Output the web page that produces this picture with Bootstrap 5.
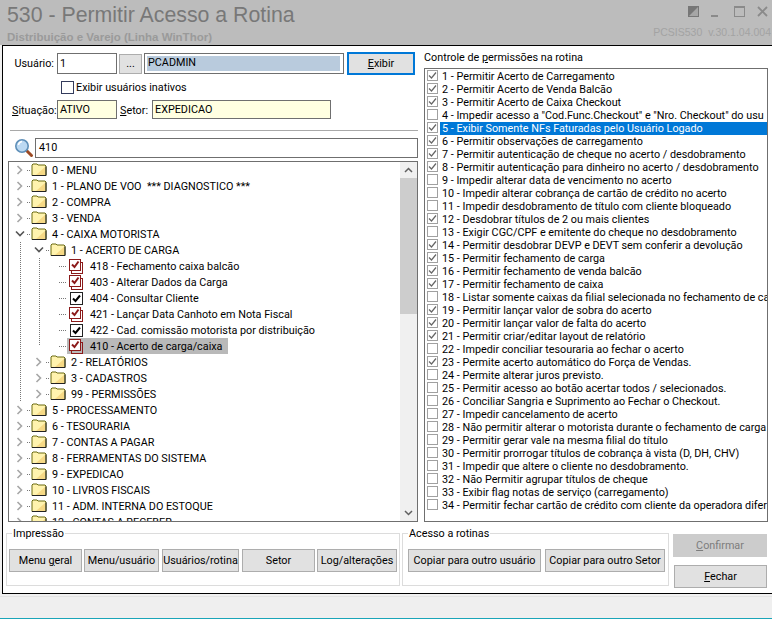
<!DOCTYPE html>
<html lang="pt-BR">
<head>
    <meta charset="UTF-8">
    <title>530 - Permitir Acesso a Rotina</title>
    <meta name="viewport" content="width=device-width, initial-scale=1">
    <link href="https://cdn.jsdelivr.net/npm/bootstrap@5.3.3/dist/css/bootstrap.min.css" rel="stylesheet">
    <style>
        html, body { height: 619px; overflow: hidden; }
        body { background: #f0f0f0; font-family: Roboto, "Liberation Sans", sans-serif; font-size: 10.8px; line-height: 13px; color: #000; }

        /* cabecalho */
        .head-bar { height: 45px; background: #bcbcbc; padding: 4px 1px 0 7px; font-family: "Liberation Sans", sans-serif; }
        .head-title { font-size: 21.3px; line-height: 22px; color: #787878; }
        .head-sub { font-size: 11.5px; line-height: 14px; font-weight: 700; color: #9a9a9a; margin-top: 4px; }
        .head-ver { font-size: 10.5px; line-height: 14px; color: #a3a3a3; white-space: pre; margin-top: 8px; }
        .win-btns { height: 13px; gap: 12px; padding: 2px 3px 0 0; }
        .win-min { margin-right: 4px; }

        /* painel principal */
        .main-panel { height: 549px; margin-left: 2px; background: #fff; border-top: 1px solid #000; border-left: 1px solid #000; border-bottom: 1px solid #000; }
        .left-col { width: 415px; padding-left: 5px; }
        .right-col { width: 353px; padding-left: 6px; }

        .line-user { height: 23px; margin-top: 6px; }
        .line-check { height: 25px; padding: 6px 0 0 53px; }
        .line-info { height: 20px; }
        .lbl-user { flex: none; width: 49px; text-align: right; padding-right: 3px; }
        .lbl-sit { flex: none; width: 49px; padding-left: 4px; white-space: nowrap; }
        .lbl-setor { flex: none; width: 35px; padding-left: 3px; }

        .win-input { height: 21px; border: 1px solid #6f6f6f; background: #fff; padding: 2px; line-height: 15px; white-space: nowrap; }
        .win-input.yellow { background: #ffffe1; height: 19px; padding: 1px 2px; }
        .win-input.search-box { height: 20px; padding: 1px 2px 1px 3px; flex: 1; }
        .w-user { flex: none; width: 60px; }
        .w-setor { flex: none; width: 179px; }
        .name-box { flex: none; width: 200px; margin-left: 2px; }
        .name-fill { display: block; height: 15px; width: 193px; background: #b9cbdd; padding-left: 1px; line-height: 14px; }

        .win-btn { display: block; flex: none; height: 23px; padding: 0; background: #e1e1e1; border: 1px solid #adadad; border-radius: 0; color: #000; font-size: 10.8px; line-height: 13px; text-align: center; white-space: nowrap; }
        .win-btn:disabled { background: #cccccc; border-color: #cccccc; color: #7d7d7d; opacity: 1; }
        .btn-dots { width: 23px; height: 20px; margin-left: 2px; }
        .btn-exibir { width: 68px; margin-left: 3px; border: 2px solid #0078d7; }
        .btn-w73 { width: 73px; }
        .btn-w75 { width: 75px; margin-left: 2px; }
        .btn-w77 { width: 77px; margin-left: 3px; }
        .btn-w73b { width: 73px; margin-left: 3px; }
        .btn-w80 { width: 80px; margin-left: 2px; }
        .btn-copy1 { width: 133px; }
        .btn-copy2 { width: 120px; }
        .btn-confirm { width: 94px; }
        .btn-fechar { width: 93px; margin-left: 1px; }

        .win-check { flex: none; display: block; width: 13px; height: 13px; border: 1px solid #333b5c; margin-right: 2px; }
        .sep-line { height: 1px; background: #a9a9a9; margin: 10px 0 7px 2px; }
        .search-icon { flex: none; margin-left: 6px; }

        /* arvore */
        .tree-box { height: 361px; margin-top: 3px; border: 1px solid #6f6f6f; overflow: hidden; }
        .tree-scroll { flex: 1; overflow: hidden; }
        .tree-row { height: 16px; white-space: nowrap; }
        .tree-guide { flex: none; width: 1px; height: 16px; background: repeating-linear-gradient(to bottom, #777 0 1px, transparent 1px 2px); }
        .tree-guide.first { margin-left: 11px; }
        .tree-guide.second { margin-left: 18px; }
        .tree-guide.half { height: 8px; align-self: flex-start; }
        .tree-dots { flex: none; width: 4px; height: 1px; background: repeating-linear-gradient(to right, #777 0 1px, transparent 1px 2px); margin-left: 2px; }
        .tree-dots.long { width: 8px; margin-left: 19px; }
        .tree-chev { flex: none; width: 10px; display: flex; justify-content: center; align-items: center; }
        .tree-chev.lv0 { margin-left: 6px; }
        .tree-chev.lv1 { margin-left: 13px; }
        .tree-folder { flex: none; display: block; }
        .tree-text { margin-left: 5px; height: 16px; padding-top: 1px; line-height: 16px; }
        .tree-node { display: flex; align-items: center; height: 16px; padding: 0 5px 0 2px; }
        .tree-node .tree-text { margin-left: 7px; }
        .tree-node.picked { background: #b9b9b9; }
        .node-icon { flex: none; display: block; width: 14px; height: 15px; }

        .scroll-track { flex: none; width: 17px; background: #f0f0f0; }
        .scroll-arrow { height: 16px; }
        .scroll-thumb { height: 136px; background: #cdcdcd; }

        /* grupos */
        .group-box { position: relative; flex: none; height: 53px; border: 1px solid #dcdcdc; }
        .group-title { position: absolute; left: 5px; top: -6px; background: #fff; padding: 0 1px; line-height: 12px; }
        .group-print { width: 394px; margin: 11px 0 0 -2px; }
        .group-copy { width: 267px; }
        .group-row { padding: 15px 0 0 2px; }
        .group-row.copy { padding-left: 5px; gap: 4px; }

        /* permissoes */
        .perm-title { height: 22px; padding-top: 5px; }
        .perm-box { height: 454px; width: 344px; border: 1px solid #6f6f6f; padding-top: 1px; overflow: hidden; }
        .perm-row { height: 13px; white-space: nowrap; padding-left: 2px; }
        .perm-check { flex: none; width: 11px; height: 11px; display: block; margin-right: 2px; }
        .perm-text { flex: 1; line-height: 13px; padding-left: 2px; overflow: hidden; }
        .perm-row.selected .perm-text { background: #0078d7; color: #fff; }
        .bottom-actions { margin: 11px 0 0 -22px; }
        .action-col { margin-left: 4px; gap: 8px; padding-top: 1px; }

        /* rodape */
        .status-zone { height: 25px; padding-top: 2px; }
        .status-bar { height: 22px; background: #efefef; border-top: 1px solid #e3e3e3; }
        .teal-line { height: 1px; background: #1aa5b8; }
    </style>
</head>
<body>

    <header class="head-bar d-flex justify-content-between">
        <div>
            <div class="head-title">530 - Permitir Acesso a Rotina</div>
            <div class="head-sub">Distribuição e Varejo (Linha WinThor)</div>
        </div>
        <div class="d-flex flex-column align-items-end">
            <div class="win-btns d-flex align-items-start">
                <svg width="11" height="11" viewBox="0 0 11 11"><rect x=".5" y=".5" width="10" height="10" fill="#a6a6a6" stroke="#777"/><path d="M0 11V0h11z" fill="#777"/></svg>
                <svg class="win-min" width="7" height="11" viewBox="0 0 7 11"><rect y="9" width="7" height="2" fill="#8a8a8a"/></svg>
                <svg width="11" height="11" viewBox="0 0 11 11"><rect x=".5" y="1" width="10" height="9.500" fill="none" stroke="#8a8a8a"/><rect width="11" height="2" fill="#8a8a8a"/></svg>
                <svg width="11" height="11" viewBox="0 0 11 11"><path d="M1 1l9 9M10 1l-9 9" stroke="#8a8a8a" stroke-width="1.800"/></svg>
            </div>
            <div class="head-ver">PCSIS530  v.30.1.04.004</div>
        </div>
    </header>

    <div class="main-panel d-flex">
        <div class="left-col d-flex flex-column">
            <div class="line-user d-flex align-items-center">
                <span class="lbl-user">Usuário:</span>
                <div class="win-input w-user">1</div>
                <button type="button" class="win-btn btn-dots">...</button>
                <div class="win-input name-box"><span class="name-fill">PCADMIN</span></div>
                <button type="button" class="win-btn btn-exibir"><u>E</u>xibir</button>
            </div>
            <div class="line-check d-flex align-items-start">
                <span class="win-check"></span>
                <span>Exibir usuários inativos</span>
            </div>
            <div class="line-info d-flex align-items-start">
                <span class="lbl-sit pt-1"><u>S</u>ituação:</span>
                <div class="win-input yellow w-user">ATIVO</div>
                <span class="lbl-setor pt-1"><u>S</u>etor:</span>
                <div class="win-input yellow w-setor">EXPEDICAO</div>
            </div>
            <div class="sep-line"></div>
            <div class="d-flex align-items-center">
                <svg class="search-icon" width="21" height="20" viewBox="0 0 21 20">
                    <path d="M13 13l4.500 4.500" stroke="#9c4a24" stroke-width="3" stroke-linecap="round"/>
                    <circle cx="8" cy="8" r="6.200" fill="#bcd9f2" stroke="#5e8fb8" stroke-width="1.600"/>
                    <path d="M4.500 7a4 4 0 0 1 3.500-3.500" stroke="#fff" stroke-width="1.400" fill="none"/>
                </svg>
                <div class="win-input search-box">410</div>
            </div>
            <div class="tree-box d-flex">
                <div class="tree-scroll" id="treeList"></div>
                <div class="scroll-track d-flex flex-column">
                    <div class="scroll-arrow d-flex align-items-center justify-content-center">
                        <svg width="9" height="6" viewBox="0 0 9 6"><path d="M1 5l3.500-3.500L8 5" fill="none" stroke="#606060" stroke-width="1.500"/></svg>
                    </div>
                    <div class="scroll-thumb"></div>
                    <div class="flex-fill"></div>
                    <div class="scroll-arrow d-flex align-items-center justify-content-center">
                        <svg width="9" height="6" viewBox="0 0 9 6"><path d="M1 1l3.500 3.500L8 1" fill="none" stroke="#606060" stroke-width="1.500"/></svg>
                    </div>
                </div>
            </div>
            <div class="group-box group-print">
                <span class="group-title">Impressão</span>
                <div class="group-row d-flex">
                    <button type="button" class="win-btn btn-w73">Menu <u>g</u>eral</button>
                    <button type="button" class="win-btn btn-w75">Menu/usuário</button>
                    <button type="button" class="win-btn btn-w77">Usuários/rotina</button>
                    <button type="button" class="win-btn btn-w73b">Setor</button>
                    <button type="button" class="win-btn btn-w80">Log/alterações</button>
                </div>
            </div>
        </div>
        <div class="right-col d-flex flex-column">
            <div class="perm-title">Controle de <u>p</u>ermissões na rotina</div>
            <div class="perm-box" id="permList"></div>
            <div class="bottom-actions d-flex">
                <div class="group-box group-copy">
                    <span class="group-title">Acesso a rotinas</span>
                    <div class="group-row copy d-flex">
                        <button type="button" class="win-btn btn-copy1">Copiar para outro usuário</button>
                        <button type="button" class="win-btn btn-copy2">Copiar para outro Setor</button>
                    </div>
                </div>
                <div class="action-col d-flex flex-column">
                    <button type="button" class="win-btn btn-confirm" disabled><u>C</u>onfirmar</button>
                    <button type="button" class="win-btn btn-fechar"><u>F</u>echar</button>
                </div>
            </div>
        </div>
    </div>

    <div class="status-zone">
        <div class="status-bar"></div>
        <div class="teal-line"></div>
    </div>

    <script>
        const chevRight = '<svg width="8" height="10" viewBox="0 0 8 10"><path d="M1.500 1l4 4-4 4" fill="none" stroke="#a6a6a6" stroke-width="1.600"/></svg>';
        const chevDown = '<svg width="10" height="8" viewBox="0 0 10 8"><path d="M1 1.500l4 4 4-4" fill="none" stroke="#555" stroke-width="1.600"/></svg>';
        const folder = '<svg class="tree-folder" width="16" height="14" viewBox="0 0 16 14"><path d="M1 3V2l1-1h4l1 1h7l1 1v9.500H1z" fill="#fff3ae" stroke="#6a6a10"/><path d="M14 4v8H5z" fill="#f6d985"/><path d="M15 3.500v9H1" fill="none" stroke="#222"/></svg>';
        const redCheck = '<svg class="node-icon" viewBox="0 0 14 15"><rect x="2.500" y="3.500" width="11" height="11" fill="none" stroke="#8b1a1a"/><rect x=".5" y=".5" width="11" height="11" fill="#fff" stroke="#8b1a1a"/><path d="M3 5.500l2.500 2.500L9.500 2.500" fill="none" stroke="#8b1a1a" stroke-width="2"/></svg>';
        const blackCheck = '<svg class="node-icon" viewBox="0 0 14 15"><rect x="1.500" y="1.500" width="12" height="12" fill="#fff" stroke="#222"/><path d="M4 7.500l2.500 2.500L11 4.500" fill="none" stroke="#000" stroke-width="2"/></svg>';

        // nivel, texto, aberto ou marca, selecionado
        const tree = [
            [0, "0 - MENU"],
            [0, "1 - PLANO DE VOO &nbsp;*** DIAGNOSTICO ***"],
            [0, "2 - COMPRA"],
            [0, "3 - VENDA"],
            [0, "4 - CAIXA MOTORISTA", "open"],
            [1, "1 - ACERTO DE CARGA", "open"],
            [2, "418 - Fechamento caixa balcão", "red"],
            [2, "403 - Alterar Dados da Carga", "red"],
            [2, "404 - Consultar Cliente", "black"],
            [2, "421 - Lançar Data Canhoto em Nota Fiscal", "red"],
            [2, "422 - Cad. comissão motorista por distribuição", "black"],
            [2, "410 - Acerto de carga/caixa", "red", true],
            [1, "2 - RELATÓRIOS"],
            [1, "3 - CADASTROS"],
            [1, "99 - PERMISSÕES"],
            [0, "5 - PROCESSAMENTO"],
            [0, "6 - TESOURARIA"],
            [0, "7 - CONTAS A PAGAR"],
            [0, "8 - FERRAMENTAS DO SISTEMA"],
            [0, "9 - EXPEDICAO"],
            [0, "10 - LIVROS FISCAIS"],
            [0, "11 - ADM. INTERNA DO ESTOQUE"],
            [0, "12 - CONTAS A RECEBER"]
        ];

        const treeList = document.getElementById("treeList");
        tree.forEach(node => {
            const [level, text, kind, picked] = node;
            const chev = `<span class="tree-chev lv${level}">${kind === "open" ? chevDown : chevRight}</span>`;
            const row = document.createElement("div");
            row.className = "tree-row d-flex align-items-center";
            let html = level > 0 ? '<span class="tree-guide first"></span>' : "";
            if (level < 2) {
                html += `${chev}<span class="tree-dots"></span>${folder}<span class="tree-text">${text}</span>`;
            } else {
                html += `<span class="tree-guide second${picked ? " half" : ""}"></span><span class="tree-dots long"></span>`;
                html += `<span class="tree-node${picked ? " picked" : ""}">${kind === "red" ? redCheck : blackCheck}<span class="tree-text">${text}</span></span>`;
            }
            row.innerHTML = html;
            treeList.appendChild(row);
        });

        const perms = [
            [1, "1 - Permitir Acerto de Carregamento"],
            [1, "2 - Permitir Acerto de Venda Balcão"],
            [1, "3 - Permitir Acerto de Caixa Checkout"],
            [0, "4 - Impedir acesso a \"Cod.Func.Checkout\" e \"Nro. Checkout\" do usu"],
            [1, "5 - Exibir Somente NFs Faturadas pelo Usuário Logado"],
            [1, "6 - Permitir observações de carregamento"],
            [1, "7 - Permitir autenticação de cheque no acerto / desdobramento"],
            [1, "8 - Permitir autenticação para dinheiro no acerto / desdobramento"],
            [0, "9 - Impedir alterar data de vencimento no acerto"],
            [0, "10 - Impedir alterar cobrança de cartão de crédito no acerto"],
            [0, "11 - Impedir desdobramento de título com cliente bloqueado"],
            [1, "12 - Desdobrar títulos de 2 ou mais clientes"],
            [0, "13 - Exigir CGC/CPF e emitente do cheque no desdobramento"],
            [1, "14 - Permitir desdobrar DEVP e DEVT sem conferir a devolução"],
            [1, "15 - Permitir fechamento de carga"],
            [1, "16 - Permitir fechamento de venda balcão"],
            [1, "17 - Permitir fechamento de caixa"],
            [0, "18 - Listar somente caixas da filial selecionada no fechamento de car"],
            [1, "19 - Permitir lançar valor de sobra do acerto"],
            [1, "20 - Permitir lançar valor de falta do acerto"],
            [1, "21 - Permitir criar/editar layout de relatório"],
            [0, "22 - Impedir conciliar tesouraria ao fechar o acerto"],
            [1, "23 - Permite acerto automático do Força de Vendas."],
            [0, "24 - Permite alterar juros previsto."],
            [0, "25 - Permitir acesso ao botão acertar todos / selecionados."],
            [0, "26 - Conciliar Sangria e Suprimento ao Fechar o Checkout."],
            [0, "27 - Impedir cancelamento de acerto"],
            [0, "28 - Não permitir alterar o motorista durante o fechamento de carga"],
            [0, "29 - Permitir gerar vale na mesma filial do título"],
            [0, "30 - Permitir prorrogar títulos de cobrança à vista (D, DH, CHV)"],
            [0, "31 - Impedir que altere o cliente no desdobramento."],
            [0, "32 - Não Permitir agrupar títulos de cheque"],
            [0, "33 - Exibir flag notas de serviço (carregamento)"],
            [0, "34 - Permitir fechar cartão de crédito com cliente da operadora difer"]
        ];

        const permList = document.getElementById("permList");
        perms.forEach((perm, i) => {
            const row = document.createElement("div");
            row.className = "perm-row d-flex" + (i === 4 ? " selected" : "");
            const tick = perm[0] ? '<path d="M2 5.500l2.500 2.500L9 2.500" fill="none" stroke="#666" stroke-width="1.200"/>' : "";
            row.innerHTML = `<svg class="perm-check" viewBox="0 0 11 11"><rect x=".5" y=".5" width="10" height="10" fill="#fff" stroke="#a0a0a0"/>${tick}</svg><span class="perm-text">${perm[1]}</span>`;
            permList.appendChild(row);
        });
    </script>
    <script src="https://cdn.jsdelivr.net/npm/bootstrap@5.3.3/dist/js/bootstrap.bundle.min.js"></script>
</body>
</html>
